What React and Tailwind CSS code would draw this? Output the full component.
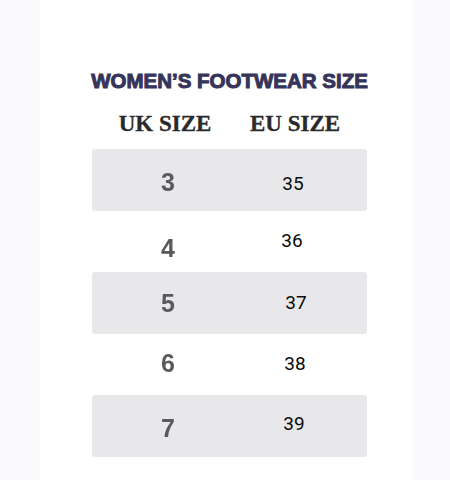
export default function App() {
  const rows = [
    { uk: "3", eu: "35", bg: true, ukCls: "translate-y-[2px]", euCls: "translate-y-[4px] -translate-x-[1px]" },
    { uk: "4", eu: "36", bg: false, ukCls: "translate-y-[6px]", euCls: "-translate-y-[1px] -translate-x-[2px]" },
    { uk: "5", eu: "37", bg: true, ukCls: "translate-y-[0px]", euCls: "translate-y-[0px] translate-x-[2px]" },
    { uk: "6", eu: "38", bg: false, ukCls: "-translate-y-[2px]", euCls: "-translate-y-[1px] translate-x-[1px]" },
    { uk: "7", eu: "39", bg: true, ukCls: "translate-y-[2px]", euCls: "-translate-y-[2px]" },
  ];
  return (
    <div className="w-[450px] h-[480px] bg-[#fafafc] flex">
      <div className="ml-[40px] w-[372px] h-[480px] bg-white pl-[51px]">
        <div className="w-[277px] flex flex-col">
          <div
            className="mt-[69px] text-center text-[20.5px] leading-[24px] font-bold text-[#36345a] whitespace-nowrap [-webkit-text-stroke:1px_#36345a]"
            style={{ fontFamily: '"Liberation Sans", Arial, sans-serif' }}
          >
            WOMEN’S FOOTWEAR SIZE
          </div>
          <div
            className="mt-[18px] ml-[1px] flex text-[23px] leading-[26px] font-bold text-[#2a2a2a] whitespace-nowrap [-webkit-text-stroke:0.3px_#2a2a2a]"
            style={{ fontFamily: '"Liberation Serif", "Times New Roman", serif' }}
          >
            <div className="w-[152px] text-center -translate-x-[3px]">UK SIZE</div>
            <div className="w-[100px] text-center translate-x-[1px]">EU SIZE</div>
          </div>
          <div className="mt-[12px] ml-[1px] w-[275px] flex flex-col">
            {rows.map((r, i) => (
              <div
                key={i}
                className={
                  "flex items-center " +
                  (r.bg ? "bg-[#e8e8eb] rounded-[3px] h-[62px]" : "bg-transparent h-[61px]")
                }
              >
                <div
                  className={
                    "w-[152px] text-center text-[25px] leading-[30px] font-bold text-[#5a5a5c] blur-[0.4px] " +
                    r.ukCls
                  }
                  style={{ fontFamily: '"Liberation Sans", Arial, sans-serif' }}
                >
                  {r.uk}
                </div>
                <div
                  className={"w-[100px] text-center text-[19px] leading-[24px] text-[#0a0a0a] " + r.euCls}
                  style={{ fontFamily: 'Roboto, "Liberation Sans", sans-serif' }}
                >
                  {r.eu}
                </div>
              </div>
            ))}
          </div>
        </div>
      </div>
    </div>
  );
}
